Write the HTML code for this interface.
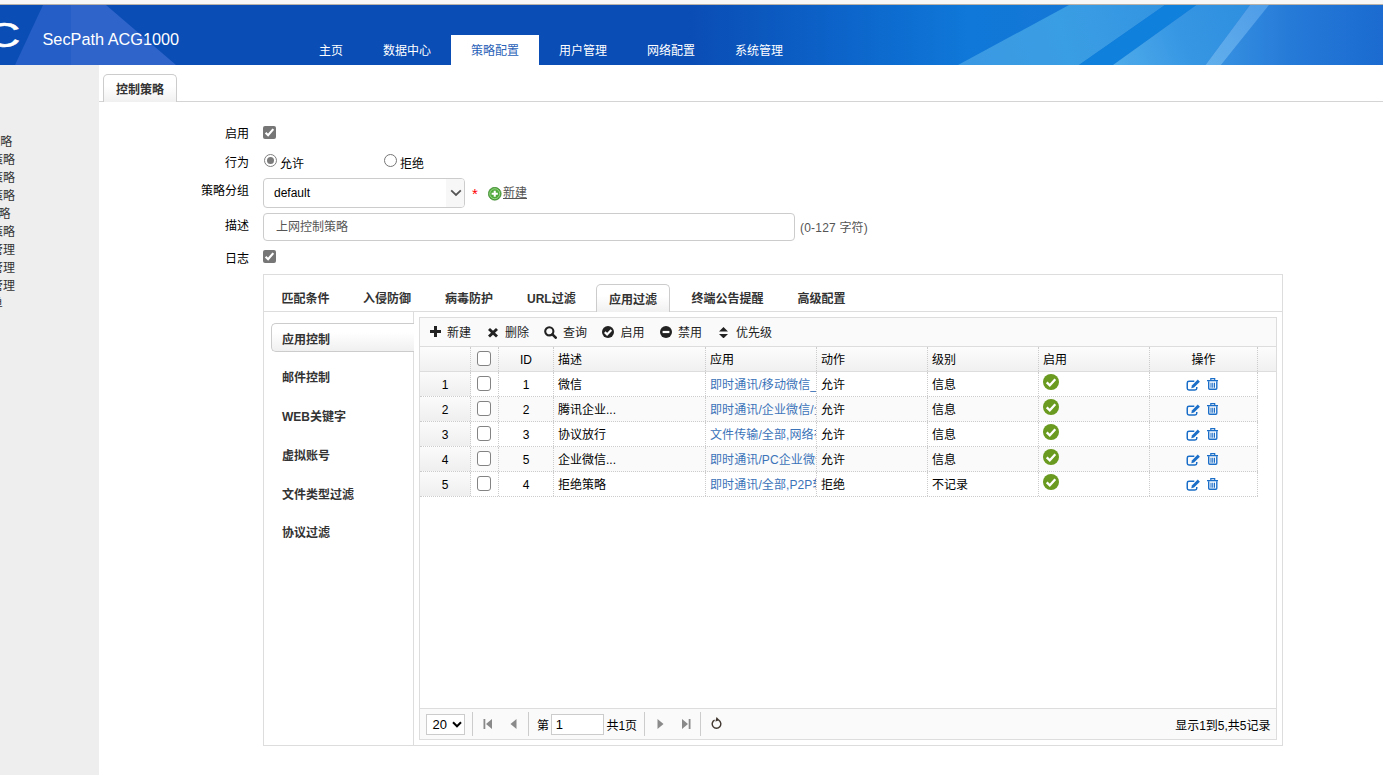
<!DOCTYPE html>
<html lang="zh-CN">
<head>
<meta charset="utf-8">
<title>SecPath ACG1000</title>
<style>
*{box-sizing:border-box;margin:0;padding:0}
html,body{width:1383px;height:775px;overflow:hidden;background:#fff}
body{position:relative;font-family:"Liberation Sans","Noto Sans CJK SC",sans-serif;font-size:12px;color:#000}
.abs{position:absolute}
.t{position:absolute;white-space:nowrap;line-height:14px;height:14px}
#topstrip{left:0;top:0;width:1383px;height:5px;background:#f7f7f7;border-bottom:1px solid #b9b2a8}
#hdr{left:0;top:5px;width:1383px;height:60px;overflow:hidden}
#side{left:0;top:65px;width:99px;height:710px;background:#eee;overflow:hidden}

#logoC{left:-14px;top:10px;font-size:34.500px;line-height:40px;color:#fff;transform:scaleX(1.38);transform-origin:0 0;font-weight:normal;-webkit-text-stroke:0.500px #fff}
#prod{left:42.500px;top:23.500px;font-size:16.300px;line-height:20px;height:20px;color:#fff}
.nav{top:30px;height:30px;line-height:33px;text-align:center;color:#fff;font-size:12px}
.nav.on{background:#fff;color:#2a62b8}

.sd{color:#333;font-size:12px}
#ctabline{left:99px;top:101px;width:1284px;height:1px;background:#d4d4d4}
#ctab{left:103px;top:74px;width:74px;height:28px;border:1px solid #ccc;border-bottom:0;border-radius:5px 5px 0 0;background:linear-gradient(#fff,#fff 40%,#f0f0f0);text-align:center;font-weight:bold;color:#333;line-height:31px}
.lbl{right:1134px;text-align:right;color:#000}
.cb{width:13px;height:13px;border-radius:2px;background:#767676}
.cb svg{display:block}
.rd{width:13px;height:13px;border-radius:50%;border:1.300px solid #767676;background:#fff}
.rd.on{border-color:#808080}
.rd.on:after{content:"";position:absolute;left:1.700px;top:1.700px;width:7px;height:7px;border-radius:50%;background:#7b7b7b}
#sel{left:263px;top:178px;width:202px;height:30px;border:1px solid #ccc;border-radius:4px;background:#fff;overflow:hidden}
#sel span{position:absolute;left:10px;top:7px;line-height:14px;color:#000}
#sel i{position:absolute;right:0;top:0;width:18px;height:28px;background:#f7f7f7}
#desc{left:263px;top:213px;width:532px;height:28px;border:1px solid #ccc;border-radius:4px;background:#fff}
#desc span{position:absolute;left:12px;top:6px;line-height:14px;color:#555}
#panel{left:263px;top:274px;width:1020px;height:472px;border:1px solid #ddd;background:#fff}

.ptab{font-weight:bold;color:#333}
#ptabline{left:264px;top:311px;width:1018px;height:1px;background:#ddd}
#ptabon{left:596px;top:284px;width:74px;height:28px;border:1px solid #ccc;border-bottom:0;border-radius:5px 5px 0 0;background:linear-gradient(#fff,#fff 40%,#f0f0f0);text-align:center;font-weight:bold;color:#333;line-height:30px}
#vline{left:413px;top:312px;width:1px;height:433px;background:#ddd}
#navon{left:271px;top:323px;width:143px;height:29px;border:1px solid #ccc;border-right:0;border-radius:5px 0 0 5px;background:linear-gradient(#fff,#fff 30%,#f0f0f0)}
#grid{left:419px;top:317px;width:858px;height:423px;border:1px solid #ddd;background:#fff}
#tb{left:0;top:0;width:856px;height:29px;background:#fafafa;border-bottom:1px solid #ddd}
#gh{left:0;top:29px;width:856px;height:25px;background:linear-gradient(#fcfcfc,#f0f0f0);border-bottom:1px solid #ddd}

.tbl{color:#222}
.hc{top:0;height:24px;border-right:1px dotted #ccc;line-height:27px;padding:0 4px;overflow:hidden;white-space:nowrap}
.gr{left:0;width:838px;height:25px;border-bottom:1px dotted #ccc;background:#fff}
.gr.alt{background:#fafafa}
.gc{top:0;height:24px;border-right:1px dotted #ccc;line-height:27px;padding:0 4px;overflow:hidden;white-space:nowrap}
.gc.rn{background:linear-gradient(#fbfbfb,#efefef)}
.gc.lk{color:#3b73b9;padding-right:0}
.lks{display:block;width:106px;overflow:hidden;letter-spacing:0.100px}
.ck{position:absolute;left:5.700px;top:4.300px;width:14.700px;height:15px;border:1.400px solid #838383;border-radius:3px;background:#fff}

#pg{left:0;top:390px;width:856px;height:31px;background:#fafafa;border-top:1px solid #ddd}
.psep{top:3px;width:1px;height:24px;background:#ccc}
#psel{width:39px;height:21px;border:1px solid #ccc;background:#fff;border-radius:0}
#psel span{position:absolute;left:5.500px;top:2.500px;line-height:14px;font-size:13px}
#pin{width:53px;height:20.500px;border:1px solid #ccc;background:#fff}
#pin span{position:absolute;left:4px;top:2.500px;line-height:14px;font-size:13px}
</style>
</head>
<body>
<div id="topstrip" class="abs"></div>
<div id="hdr" class="abs">
<svg class="abs" style="left:0;top:0" width="1383" height="60" viewBox="0 5 1383 60" preserveAspectRatio="none">
<defs>
<linearGradient id="gbase" x1="0" y1="0" x2="1383" y2="0" gradientUnits="userSpaceOnUse">
<stop offset="0" stop-color="#0a4db5"/><stop offset="0.5" stop-color="#0a4db5"/><stop offset="0.6" stop-color="#0c62c8"/><stop offset="0.7" stop-color="#0f78d8"/><stop offset="0.93" stop-color="#2276d4"/><stop offset="1" stop-color="#1e6ed0"/>
</linearGradient>
<linearGradient id="gb1" x1="958" y1="65" x2="1165" y2="5" gradientUnits="userSpaceOnUse">
<stop offset="0" stop-color="#3a98e2"/><stop offset="0.5" stop-color="#3a9ee4"/><stop offset="1" stop-color="#3394e1"/>
</linearGradient>
<linearGradient id="gb2" x1="1113" y1="65" x2="1250" y2="5" gradientUnits="userSpaceOnUse">
<stop offset="0" stop-color="#4eabea"/><stop offset="0.5" stop-color="#3696e3"/><stop offset="1" stop-color="#2e8fe0"/>
</linearGradient>
<linearGradient id="gb3" x1="1205" y1="65" x2="1269" y2="5" gradientUnits="userSpaceOnUse">
<stop offset="0" stop-color="#62afec"/><stop offset="1" stop-color="#4f9ce8"/>
</linearGradient>
<linearGradient id="gr" x1="1221" y1="0" x2="1383" y2="0" gradientUnits="userSpaceOnUse">
<stop offset="0" stop-color="#3690e1"/><stop offset="0.45" stop-color="#2579d7"/><stop offset="1" stop-color="#1b6bd0"/>
</linearGradient>
</defs>
<rect x="0" y="5" width="1383" height="60" fill="url(#gbase)"/>
<polygon points="1221,65 1269,5 1383,5 1383,65" fill="url(#gr)"/>
<polygon points="958,65 1069,5 1165,5 1079,65" fill="url(#gb1)"/>
<polygon points="1079,65 1165,5 1196.500,5 1113,65" fill="#0f80dc"/>
<polygon points="1113,65 1196.500,5 1250,5 1205.500,65" fill="url(#gb2)"/>
<polygon points="1205.500,65 1250,5 1269,5 1221,65" fill="url(#gb3)"/>
<polygon points="15,65 43,5 71,5 71,65" fill="#245ec6"/>
<polygon points="71,65 71,5 106,5 176,65" fill="#2f65cb"/>
</svg>
<div class="abs" id="logoC">C</div>
<div class="t" id="prod">SecPath ACG1000</div>
<div class="abs nav" style="left:299px;width:64px">主页</div>
<div class="abs nav" style="left:363px;width:88px">数据中心</div>
<div class="abs nav on" style="left:451px;width:88px">策略配置</div>
<div class="abs nav" style="left:539px;width:88px">用户管理</div>
<div class="abs nav" style="left:627px;width:88px">网络配置</div>
<div class="abs nav" style="left:715px;width:88px">系统管理</div>
</div>
<div id="side" class="abs">
<div class="t sd" style="right:86.8px;top:69.5px">控制策略</div>
<div class="t sd" style="right:84.0px;top:87.5px">审计策略</div>
<div class="t sd" style="right:84.0px;top:105.5px">安全策略</div>
<div class="t sd" style="right:84.0px;top:123.5px">路由策略</div>
<div class="t sd" style="right:88.5px;top:141.5px">限额策略</div>
<div class="t sd" style="right:84.0px;top:159.5px">黑名单策略</div>
<div class="t sd" style="right:84.0px;top:177.5px">对象管理</div>
<div class="t sd" style="right:84.0px;top:195.5px">用户管理</div>
<div class="t sd" style="right:84.0px;top:213.5px">地址管理</div>
<div class="t sd" style="right:96.3px;top:231.5px">策略菜单</div>
</div>
<div id="main">
<div class="abs" id="ctabline"></div>
<div class="abs" id="ctab"><span>控制策略</span></div>

<div class="t lbl" style="top:127px">启用</div>
<div class="abs cb" style="left:263px;top:126px"><svg width="13" height="13" viewBox="0 0 13 13"><path d="M2.600 6.700 L5.100 9.200 L10.300 3.100" fill="none" stroke="#fff" stroke-width="2.200"/></svg></div>

<div class="t lbl" style="top:156px">行为</div>
<div class="abs rd on" style="left:264px;top:154px"></div>
<div class="t" style="left:280px;top:157px">允许</div>
<div class="abs rd" style="left:384px;top:154px"></div>
<div class="t" style="left:400px;top:157px">拒绝</div>

<div class="t lbl" style="top:184px">策略分组</div>
<div class="abs" id="sel"><span>default</span><i></i><svg class="abs" style="left:186px;top:10px" width="12" height="8" viewBox="0 0 12 8"><path d="M1.200 1.400 L6 6 L10.800 1.400" fill="none" stroke="#555" stroke-width="1.800"/></svg></div>
<div class="t" style="left:472px;top:187px;color:#f00;font-size:15px">*</div>
<svg class="abs" style="left:488px;top:187.300px" width="13.500" height="13.500" viewBox="0 0 13 13"><circle cx="6.5" cy="6.500" r="6.200" fill="#4fa83a" stroke="#2f7d22" stroke-width="0.6"/><circle cx="6.5" cy="6.500" r="4.800" fill="none" stroke="#a6dc96" stroke-width="0.8"/><path d="M6.500 3.500 V9.500 M3.500 6.500 H9.500" stroke="#fff" stroke-width="2"/></svg>
<div class="t" style="left:503px;top:186px;color:#555;text-decoration:underline">新建</div>

<div class="t lbl" style="top:218.500px">描述</div>
<div class="abs" id="desc"><span>上网控制策略</span></div>
<div class="t" style="left:800px;top:220.800px;color:#555;letter-spacing:0.200px">(0-127 字符)</div>

<div class="t lbl" style="top:251.500px">日志</div>
<div class="abs cb" style="left:263px;top:250px"><svg width="13" height="13" viewBox="0 0 13 13"><path d="M2.600 6.700 L5.100 9.200 L10.300 3.100" fill="none" stroke="#fff" stroke-width="2.200"/></svg></div>

<div class="abs" id="panel"></div>
<div class="abs" id="ptabline"></div>
<div class="t ptab" style="left:281.4px;top:292px">匹配条件</div>
<div class="t ptab" style="left:363.0px;top:292px">入侵防御</div>
<div class="t ptab" style="left:445.0px;top:292px">病毒防护</div>
<div class="t ptab" style="left:527.0px;top:292px">URL过滤</div>
<div class="t ptab" style="left:691.5px;top:292px">终端公告提醒</div>
<div class="t ptab" style="left:797.5px;top:292px">高级配置</div>
<div class="abs" id="ptabon"><span>应用过滤</span></div>
<div class="abs" id="vline"></div>
<div class="abs" id="navon"></div>
<div class="t ptab" style="left:282px;top:332.7px">应用控制</div>
<div class="t ptab" style="left:282px;top:371.4px">邮件控制</div>
<div class="t ptab" style="left:282px;top:410.1px">WEB关键字</div>
<div class="t ptab" style="left:282px;top:448.9px">虚拟账号</div>
<div class="t ptab" style="left:282px;top:487.6px">文件类型过滤</div>
<div class="t ptab" style="left:282px;top:526.3px">协议过滤</div>
<div class="abs" id="grid">
<div class="abs" id="tb"></div>
<svg class="abs" style="left:9.5px;top:7.8px" width="11" height="11" viewBox="0 0 11 11"><path d="M4 0h3v4h4v3H7v4H4V7H0V4h4z" fill="#222"/></svg>
<div class="t tbl" style="left:27.0px;top:7.5px">新建</div>
<svg class="abs" style="left:68.0px;top:10.0px" width="10" height="9.500" viewBox="0 0 10 10" preserveAspectRatio="none"><path d="M2 0 L5 3 L8 0 L10 2 L7 5 L10 8 L8 10 L5 7 L2 10 L0 8 L3 5 L0 2z" fill="#222"/></svg>
<div class="t tbl" style="left:85.0px;top:7.5px">删除</div>
<svg class="abs" style="left:124.0px;top:8.0px" width="13" height="13" viewBox="0 0 13 13"><circle cx="5.300" cy="5.300" r="4.100" fill="none" stroke="#222" stroke-width="2.100"/><path d="M8.400 8.400 L11.700 11.700" stroke="#222" stroke-width="2.600" stroke-linecap="round"/></svg>
<div class="t tbl" style="left:143.0px;top:7.5px">查询</div>
<svg class="abs" style="left:182.3px;top:8.0px" width="12" height="12" viewBox="0 0 12 12"><circle cx="6" cy="6" r="6" fill="#222"/><path d="M2.800 6.100 L5.100 8.400 L9.300 4" fill="none" stroke="#fff" stroke-width="2.200"/></svg>
<div class="t tbl" style="left:200.5px;top:7.5px">启用</div>
<svg class="abs" style="left:239.7px;top:8.0px" width="12" height="12" viewBox="0 0 12 12"><circle cx="6" cy="6" r="6" fill="#222"/><path d="M2.600 6 H9.400" stroke="#fff" stroke-width="2.200"/></svg>
<div class="t tbl" style="left:258.0px;top:7.5px">禁用</div>
<svg class="abs" style="left:299.2px;top:8.8px" width="9" height="11.400" viewBox="0 0 8 11" preserveAspectRatio="none"><path d="M4 0 L8 4.300 H0z M4 11 L0 6.700 H8z" fill="#222"/></svg>
<div class="t tbl" style="left:316.0px;top:7.5px">优先级</div>
<div class="abs" id="gh">
<div class="abs hc" style="left:0.0px;width:51.0px;text-align:center"></div>
<div class="abs hc" style="left:51.0px;width:28.0px;text-align:center"><b class="ck"></b></div>
<div class="abs hc" style="left:79.0px;width:55.0px;text-align:center">ID</div>
<div class="abs hc" style="left:134.0px;width:152.0px;text-align:left">描述</div>
<div class="abs hc" style="left:286.0px;width:111.0px;text-align:left">应用</div>
<div class="abs hc" style="left:397.0px;width:111.0px;text-align:left">动作</div>
<div class="abs hc" style="left:508.0px;width:111.0px;text-align:left">级别</div>
<div class="abs hc" style="left:619.0px;width:111.0px;text-align:left">启用</div>
<div class="abs hc" style="left:730.0px;width:108.0px;text-align:center">操作</div>
<div class="abs hc" style="left:838.0px;width:18px;border-right:0"></div>
</div>
<div class="abs gr" style="top:54px">
<div class="abs gc rn" style="left:0.0px;width:51.0px;text-align:center;">1</div>
<div class="abs gc" style="left:51.0px;width:28.0px;text-align:center;"><b class="ck"></b></div>
<div class="abs gc" style="left:79.0px;width:55.0px;text-align:center;">1</div>
<div class="abs gc" style="left:134.0px;width:152.0px;">微信</div>
<div class="abs gc lk" style="left:286.0px;width:111.0px;"><span class="lks">即时通讯/移动微信_安卓,移动微信</span></div>
<div class="abs gc" style="left:397.0px;width:111.0px;">允许</div>
<div class="abs gc" style="left:508.0px;width:111.0px;">信息</div>
<div class="abs gc" style="left:619.0px;width:111.0px;"><svg class="abs" style="left:3.500px;top:2px" width="16" height="16" viewBox="0 0 16 16"><circle cx="8" cy="8" r="8" fill="#6a9a1f"/><path d="M3.700 8.300 L6.800 11.300 L12.300 5.300" fill="none" stroke="#fff" stroke-width="2.300"/></svg></div>
<div class="abs gc" style="left:730.0px;width:108.0px;"><svg class="abs" style="left:36px;top:6.500px" width="15" height="12" viewBox="0 0 15 12"><path d="M8.300 2.300 H3 Q1.250 2.300 1.250 4 V9.300 Q1.250 11 3 11 H9 Q10.750 11 10.750 9.300 V8" fill="none" stroke="#1b6ec8" stroke-width="1.500"/><path d="M5.300 9.200 L5.900 6.500 L11.800 0.600 L13.900 2.700 L8 8.600 Z" fill="#1b6ec8"/></svg><svg class="abs" style="left:56.500px;top:6px" width="11.500" height="12" viewBox="0 0 11.500 12"><path d="M0 2 H11.500 V3.300 H0z" fill="#1b6ec8"/><path d="M3.800 2 V0.700 H7.700 V2" fill="none" stroke="#1b6ec8" stroke-width="1.200"/><path d="M1.700 3.300 V10.300 Q1.700 11.300 2.700 11.300 H8.800 Q9.800 11.300 9.800 10.300 V3.300" fill="none" stroke="#1b6ec8" stroke-width="1.400"/><path d="M4 4.800 V9.800 M5.750 4.800 V9.800 M7.500 4.800 V9.800" stroke="#1b6ec8" stroke-width="1.050"/></svg></div>
</div>
<div class="abs gr alt" style="top:79px">
<div class="abs gc rn" style="left:0.0px;width:51.0px;text-align:center;">2</div>
<div class="abs gc" style="left:51.0px;width:28.0px;text-align:center;"><b class="ck"></b></div>
<div class="abs gc" style="left:79.0px;width:55.0px;text-align:center;">2</div>
<div class="abs gc" style="left:134.0px;width:152.0px;">腾讯企业...</div>
<div class="abs gc lk" style="left:286.0px;width:111.0px;"><span class="lks">即时通讯/企业微信/全部</span></div>
<div class="abs gc" style="left:397.0px;width:111.0px;">允许</div>
<div class="abs gc" style="left:508.0px;width:111.0px;">信息</div>
<div class="abs gc" style="left:619.0px;width:111.0px;"><svg class="abs" style="left:3.500px;top:2px" width="16" height="16" viewBox="0 0 16 16"><circle cx="8" cy="8" r="8" fill="#6a9a1f"/><path d="M3.700 8.300 L6.800 11.300 L12.300 5.300" fill="none" stroke="#fff" stroke-width="2.300"/></svg></div>
<div class="abs gc" style="left:730.0px;width:108.0px;"><svg class="abs" style="left:36px;top:6.500px" width="15" height="12" viewBox="0 0 15 12"><path d="M8.300 2.300 H3 Q1.250 2.300 1.250 4 V9.300 Q1.250 11 3 11 H9 Q10.750 11 10.750 9.300 V8" fill="none" stroke="#1b6ec8" stroke-width="1.500"/><path d="M5.300 9.200 L5.900 6.500 L11.800 0.600 L13.900 2.700 L8 8.600 Z" fill="#1b6ec8"/></svg><svg class="abs" style="left:56.500px;top:6px" width="11.500" height="12" viewBox="0 0 11.500 12"><path d="M0 2 H11.500 V3.300 H0z" fill="#1b6ec8"/><path d="M3.800 2 V0.700 H7.700 V2" fill="none" stroke="#1b6ec8" stroke-width="1.200"/><path d="M1.700 3.300 V10.300 Q1.700 11.300 2.700 11.300 H8.800 Q9.800 11.300 9.800 10.300 V3.300" fill="none" stroke="#1b6ec8" stroke-width="1.400"/><path d="M4 4.800 V9.800 M5.750 4.800 V9.800 M7.500 4.800 V9.800" stroke="#1b6ec8" stroke-width="1.050"/></svg></div>
</div>
<div class="abs gr" style="top:104px">
<div class="abs gc rn" style="left:0.0px;width:51.0px;text-align:center;">3</div>
<div class="abs gc" style="left:51.0px;width:28.0px;text-align:center;"><b class="ck"></b></div>
<div class="abs gc" style="left:79.0px;width:55.0px;text-align:center;">3</div>
<div class="abs gc" style="left:134.0px;width:152.0px;">协议放行</div>
<div class="abs gc lk" style="left:286.0px;width:111.0px;"><span class="lks">文件传输/全部,网络存储/全部</span></div>
<div class="abs gc" style="left:397.0px;width:111.0px;">允许</div>
<div class="abs gc" style="left:508.0px;width:111.0px;">信息</div>
<div class="abs gc" style="left:619.0px;width:111.0px;"><svg class="abs" style="left:3.500px;top:2px" width="16" height="16" viewBox="0 0 16 16"><circle cx="8" cy="8" r="8" fill="#6a9a1f"/><path d="M3.700 8.300 L6.800 11.300 L12.300 5.300" fill="none" stroke="#fff" stroke-width="2.300"/></svg></div>
<div class="abs gc" style="left:730.0px;width:108.0px;"><svg class="abs" style="left:36px;top:6.500px" width="15" height="12" viewBox="0 0 15 12"><path d="M8.300 2.300 H3 Q1.250 2.300 1.250 4 V9.300 Q1.250 11 3 11 H9 Q10.750 11 10.750 9.300 V8" fill="none" stroke="#1b6ec8" stroke-width="1.500"/><path d="M5.300 9.200 L5.900 6.500 L11.800 0.600 L13.900 2.700 L8 8.600 Z" fill="#1b6ec8"/></svg><svg class="abs" style="left:56.500px;top:6px" width="11.500" height="12" viewBox="0 0 11.500 12"><path d="M0 2 H11.500 V3.300 H0z" fill="#1b6ec8"/><path d="M3.800 2 V0.700 H7.700 V2" fill="none" stroke="#1b6ec8" stroke-width="1.200"/><path d="M1.700 3.300 V10.300 Q1.700 11.300 2.700 11.300 H8.800 Q9.800 11.300 9.800 10.300 V3.300" fill="none" stroke="#1b6ec8" stroke-width="1.400"/><path d="M4 4.800 V9.800 M5.750 4.800 V9.800 M7.500 4.800 V9.800" stroke="#1b6ec8" stroke-width="1.050"/></svg></div>
</div>
<div class="abs gr alt" style="top:129px">
<div class="abs gc rn" style="left:0.0px;width:51.0px;text-align:center;">4</div>
<div class="abs gc" style="left:51.0px;width:28.0px;text-align:center;"><b class="ck"></b></div>
<div class="abs gc" style="left:79.0px;width:55.0px;text-align:center;">5</div>
<div class="abs gc" style="left:134.0px;width:152.0px;">企业微信...</div>
<div class="abs gc lk" style="left:286.0px;width:111.0px;"><span class="lks">即时通讯/PC企业微信,企业微信</span></div>
<div class="abs gc" style="left:397.0px;width:111.0px;">允许</div>
<div class="abs gc" style="left:508.0px;width:111.0px;">信息</div>
<div class="abs gc" style="left:619.0px;width:111.0px;"><svg class="abs" style="left:3.500px;top:2px" width="16" height="16" viewBox="0 0 16 16"><circle cx="8" cy="8" r="8" fill="#6a9a1f"/><path d="M3.700 8.300 L6.800 11.300 L12.300 5.300" fill="none" stroke="#fff" stroke-width="2.300"/></svg></div>
<div class="abs gc" style="left:730.0px;width:108.0px;"><svg class="abs" style="left:36px;top:6.500px" width="15" height="12" viewBox="0 0 15 12"><path d="M8.300 2.300 H3 Q1.250 2.300 1.250 4 V9.300 Q1.250 11 3 11 H9 Q10.750 11 10.750 9.300 V8" fill="none" stroke="#1b6ec8" stroke-width="1.500"/><path d="M5.300 9.200 L5.900 6.500 L11.800 0.600 L13.900 2.700 L8 8.600 Z" fill="#1b6ec8"/></svg><svg class="abs" style="left:56.500px;top:6px" width="11.500" height="12" viewBox="0 0 11.500 12"><path d="M0 2 H11.500 V3.300 H0z" fill="#1b6ec8"/><path d="M3.800 2 V0.700 H7.700 V2" fill="none" stroke="#1b6ec8" stroke-width="1.200"/><path d="M1.700 3.300 V10.300 Q1.700 11.300 2.700 11.300 H8.800 Q9.800 11.300 9.800 10.300 V3.300" fill="none" stroke="#1b6ec8" stroke-width="1.400"/><path d="M4 4.800 V9.800 M5.750 4.800 V9.800 M7.500 4.800 V9.800" stroke="#1b6ec8" stroke-width="1.050"/></svg></div>
</div>
<div class="abs gr" style="top:154px">
<div class="abs gc rn" style="left:0.0px;width:51.0px;text-align:center;">5</div>
<div class="abs gc" style="left:51.0px;width:28.0px;text-align:center;"><b class="ck"></b></div>
<div class="abs gc" style="left:79.0px;width:55.0px;text-align:center;">4</div>
<div class="abs gc" style="left:134.0px;width:152.0px;">拒绝策略</div>
<div class="abs gc lk" style="left:286.0px;width:111.0px;"><span class="lks">即时通讯/全部,P2P软件/全部</span></div>
<div class="abs gc" style="left:397.0px;width:111.0px;">拒绝</div>
<div class="abs gc" style="left:508.0px;width:111.0px;">不记录</div>
<div class="abs gc" style="left:619.0px;width:111.0px;"><svg class="abs" style="left:3.500px;top:2px" width="16" height="16" viewBox="0 0 16 16"><circle cx="8" cy="8" r="8" fill="#6a9a1f"/><path d="M3.700 8.300 L6.800 11.300 L12.300 5.300" fill="none" stroke="#fff" stroke-width="2.300"/></svg></div>
<div class="abs gc" style="left:730.0px;width:108.0px;"><svg class="abs" style="left:36px;top:6.500px" width="15" height="12" viewBox="0 0 15 12"><path d="M8.300 2.300 H3 Q1.250 2.300 1.250 4 V9.300 Q1.250 11 3 11 H9 Q10.750 11 10.750 9.300 V8" fill="none" stroke="#1b6ec8" stroke-width="1.500"/><path d="M5.300 9.200 L5.900 6.500 L11.800 0.600 L13.900 2.700 L8 8.600 Z" fill="#1b6ec8"/></svg><svg class="abs" style="left:56.500px;top:6px" width="11.500" height="12" viewBox="0 0 11.500 12"><path d="M0 2 H11.500 V3.300 H0z" fill="#1b6ec8"/><path d="M3.800 2 V0.700 H7.700 V2" fill="none" stroke="#1b6ec8" stroke-width="1.200"/><path d="M1.700 3.300 V10.300 Q1.700 11.300 2.700 11.300 H8.800 Q9.800 11.300 9.800 10.300 V3.300" fill="none" stroke="#1b6ec8" stroke-width="1.400"/><path d="M4 4.800 V9.800 M5.750 4.800 V9.800 M7.500 4.800 V9.800" stroke="#1b6ec8" stroke-width="1.050"/></svg></div>
</div>
<div class="abs" id="pg">
<div class="abs" id="psel" style="left:6px;top:5.0px"><span>20</span><svg class="abs" style="left:25px;top:6.300px" width="10" height="7.500" viewBox="0 0 10 7.500"><path d="M1 1.300 L5 5.300 L9 1.300" fill="none" stroke="#000" stroke-width="2"/></svg></div>
<div class="abs psep" style="left:52.0px"></div>
<div class="abs psep" style="left:107.5px"></div>
<div class="abs psep" style="left:223.8px"></div>
<div class="abs psep" style="left:279.8px"></div>
<svg class="abs" style="left:63.0px;top:10.0px" width="9" height="10" viewBox="0 0 9 10"><path d="M0.500 0 H2.300 V10 H0.500z M9 0 V10 L3 5z" fill="#8a8a8a"/></svg>
<svg class="abs" style="left:89.7px;top:10.0px" width="7" height="10" viewBox="0 0 7 10"><path d="M6.500 0 V10 L0.500 5z" fill="#8a8a8a"/></svg>
<div class="t" style="left:117.0px;top:9.5px">第</div>
<div class="abs" id="pin" style="left:130.7px;top:5.0px"><span>1</span></div>
<div class="t" style="left:186.4px;top:9.5px">共1页</div>
<svg class="abs" style="left:236.7px;top:10.0px" width="7" height="10" viewBox="0 0 7 10"><path d="M0.500 0 V10 L6.500 5z" fill="#8a8a8a"/></svg>
<svg class="abs" style="left:261.5px;top:10.0px" width="9" height="10" viewBox="0 0 9 10"><path d="M6.700 0 H8.500 V10 H6.700z M0 0 V10 L6 5z" fill="#8a8a8a"/></svg>
<svg class="abs" style="left:290.9px;top:8.2px" width="11" height="12" viewBox="0 0 11 12"><path d="M7.600 3.200 A4.300 4.300 0 1 1 3.600 3.100" fill="none" stroke="#40362f" stroke-width="1.400"/><path d="M4.800 0.200 L8.600 2.500 L4.800 4.900z" fill="#40362f" transform="rotate(14 6 3)"/></svg>
<div class="t" style="right:5.5px;top:9.5px">显示1到5,共5记录</div>
</div>
</div>

</div>
</body>
</html>
